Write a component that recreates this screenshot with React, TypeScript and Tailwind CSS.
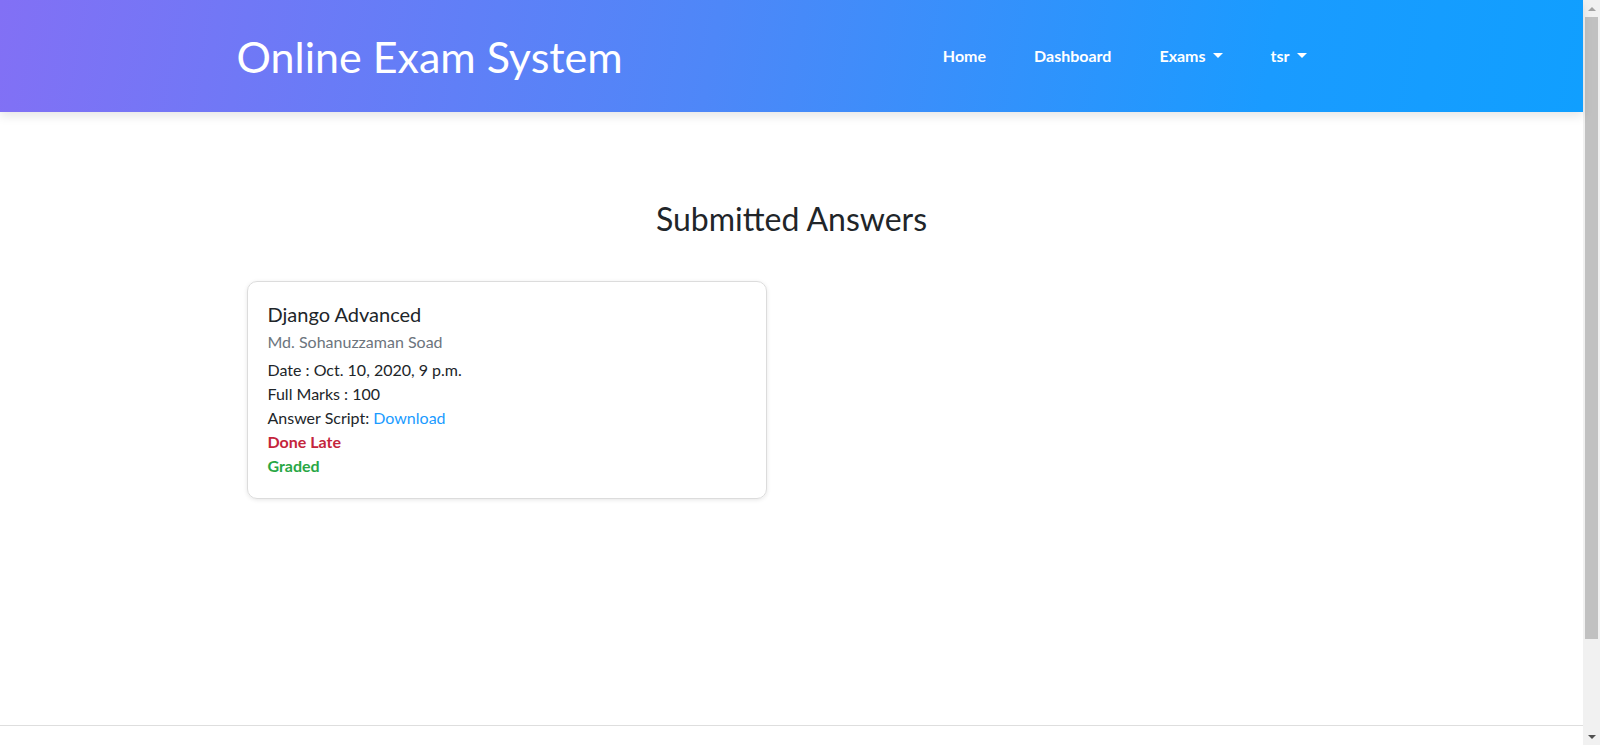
const navItems = [
  { label: 'Home', caret: false },
  { label: 'Dashboard', caret: false },
  { label: 'Exams', caret: true },
  { label: 'tsr', caret: true },
];

function Caret() {
  return (
    <span className="ml-[7px] inline-block w-0 h-0 border-x-[5px] border-x-transparent border-t-[5px] border-t-white align-middle relative top-[-1px]" />
  );
}

// browser scrollbar as it shows in the screenshot
function Scrollbar() {
  return (
    <div className="w-[17px] shrink-0 h-full bg-[#f1f1f1] flex flex-col items-center">
      <div className="h-[17px] flex items-center justify-center">
        <span className="w-0 h-0 border-x-[4px] border-x-transparent border-b-[4px] border-b-[#a3a3a3]" />
      </div>
      <div className="w-[13px] h-[622px] bg-[#c1c1c1]" />
      <div className="flex-1" />
      <div className="h-[17px] flex items-center justify-center">
        <span className="w-0 h-0 border-x-[4px] border-x-transparent border-t-[4px] border-t-[#505050]" />
      </div>
    </div>
  );
}

export default function App() {
  return (
    <div className="h-[745px] flex overflow-hidden bg-white font-['Lato','Liberation_Sans',sans-serif] text-[#212529]">
      <div className="flex-1 flex flex-col min-w-0">
        <header className="h-[112px] shrink-0 bg-[linear-gradient(100deg,#8270f5_0%,#4e87f8_45%,#1a9bff_80%,#109fff_100%)] shadow-[0_4px_10px_rgba(0,0,0,0.1)] relative z-10">
          <div className="max-w-[1140px] mx-auto px-[15px] h-full flex items-center justify-between">
            <a className="text-white text-[43px] leading-none font-normal">Online Exam System</a>
            <ul className="flex items-center mr-[16px]">
              {navItems.map((item) => (
                <li key={item.label} className="px-6 text-white text-[16px] font-bold flex items-center">
                  {item.label}
                  {item.caret && <Caret />}
                </li>
              ))}
            </ul>
          </div>
        </header>

        <main className="h-[613px] shrink-0">
          <div className="max-w-[1140px] mx-auto px-[15px]">
            <h2 className="mt-[88px] text-center text-[32px] leading-[1.2] font-normal">Submitted Answers</h2>
            <div className="mt-[33px] -mx-[15px] grid grid-cols-2">
              <div className="px-[15px]">
                <div className="m-[10px] rounded-[10px] border border-[#dcdcdc] shadow-[0_1px_4px_rgba(0,0,0,0.1)] p-5 text-[16px] leading-6">
                  <h5 className="text-[20px] leading-6 font-normal">Django Advanced</h5>
                  <h6 className="mt-1 text-[#6c757d] text-[16px] leading-6 font-normal">Md. Sohanuzzaman Soad</h6>
                  <p className="mt-1">Date : Oct. 10, 2020, 9 p.m.</p>
                  <p>Full Marks : 100</p>
                  <p>
                    Answer Script: <a className="text-[#1a9bff]">Download</a>
                  </p>
                  <p className="font-bold text-[#c4253c]">Done Late</p>
                  <p className="font-bold text-[#28a745]">Graded</p>
                </div>
              </div>
            </div>
          </div>
        </main>

        <footer className="flex-1 border-t border-[#dedede]" />
      </div>
      <Scrollbar />
    </div>
  );
}
